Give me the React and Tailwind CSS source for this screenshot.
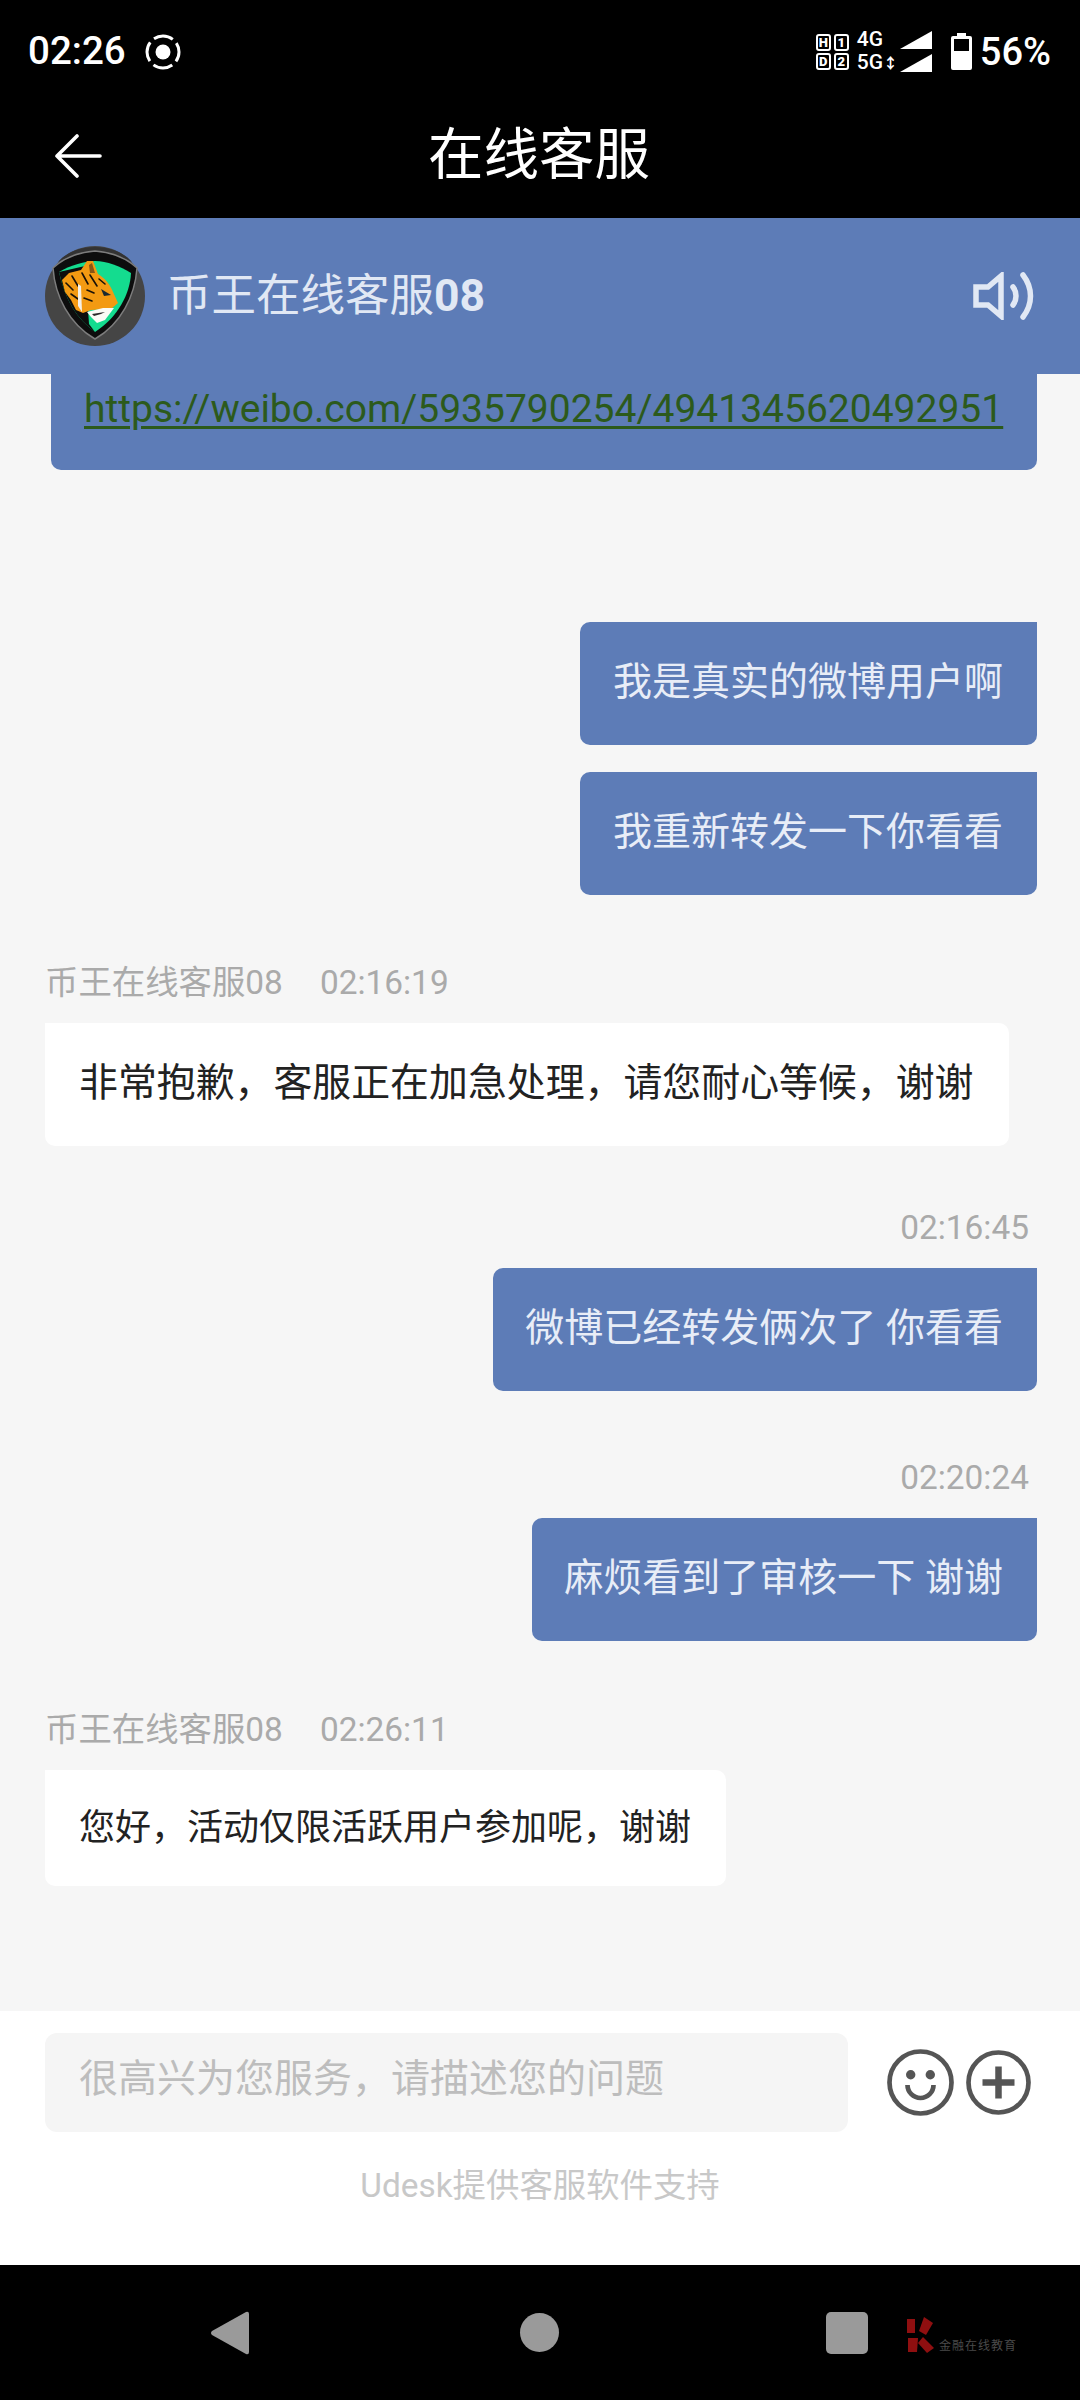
const font = "font-['Roboto','Noto_Sans_CJK_SC',sans-serif]"

function TigerAvatar() {
  return (
    <svg viewBox="0 0 100 100" className="w-[100px] h-[100px] shrink-0">
      <circle cx="50" cy="50" r="50" fill="#454545" />
      <path d="M13 16 C30 -4 70 -4 87 16 C70 6 30 6 13 16Z" fill="#333333" />
      {/* shield */}
      <path d="M50 5 C36 6 20 11 8 22 C10 50 24 78 50 93 C76 78 90 50 92 22 C80 11 64 6 50 5Z" fill="#0d0d0d" stroke="#7d7d7d" strokeWidth="1.5" />
      <path d="M14 26 C26 19 40 15 50 15 C62 15 75 20 86 27 C85 48 73 71 50 86 C32 73 20 54 14 26Z" fill="#14dc8f" />
      <path d="M14 26 L40 20 L44 78 L50 86 C32 73 20 54 14 26Z" fill="#0d0d0d" />
      {/* tiger head */}
      <path d="M17 34 L24 27 L36 24 L42 15 L48 15 L53 28 C60 32 66 40 68 46 L73 57 L66 63 L46 64 L38 67 L31 64 L26 54 L20 46 Z" fill="#f39a12" />
      <path d="M44 19 L47 17 L50 27 L45 27Z" fill="#8a5514" />
      <g fill="none" stroke="#1a1208" strokeWidth="1.6" strokeLinecap="round">
        <path d="M21 37 L28 44" />
        <path d="M27 30 L33 40" />
        <path d="M37 27 L43 38" />
        <path d="M45 29 L52 40" />
        <path d="M42 44 L49 47" />
        <path d="M39 52 L47 55" />
        <path d="M26 48 L33 53" />
        <path d="M54 33 L60 38" />
      </g>
      <path d="M33 38 L36 40 L37 66 L33 60Z" fill="#f5f0e6" />
      <path d="M56 43 L66 49 L59 50Z" fill="#1b2a30" />
      <path d="M42 66 L58 62 L69 62 L63 70 L60 74 L52 77 L46 71Z" fill="#fbfbf6" />
      <path d="M47 68 L60 66 L56 68 L49 70Z" fill="#2b2b2b" />
    </svg>
  )
}

function SpeakerIcon() {
  return (
    <svg viewBox="0 0 62 48" className="w-[62px] h-[48px]" fill="none" stroke="#e1e8f4" strokeWidth="5.5">
      <path d="M3 15 H15 L28 4 V44 L15 33 H3 Z" />
      <path d="M40 15 C44 20 44 28 40 33" strokeLinecap="round" strokeWidth="5.5" />
      <path d="M50 3 C60 16 60 32 50 45" strokeLinecap="round" strokeWidth="5.5" />
    </svg>
  )
}

function SimBox({ a, b }) {
  return (
    <div className="flex flex-col gap-[2px]">
      {[a, b].map(t => (
        <span key={t} className="w-[15px] h-[17px] rounded-[3px] border-[2px] border-white flex items-center justify-center text-[13px] font-black leading-none text-white">{t}</span>
      ))}
    </div>
  )
}

function StatusBar() {
  return (
    <div className="h-[100px] flex items-center justify-between pl-[28px] pr-[29px] pt-[3px] text-white">
      <div className="flex items-center gap-[19px]">
        <span className="text-[38.5px] leading-none font-medium">02:26</span>
        <svg viewBox="0 0 36 36" className="w-[36px] h-[36px]" fill="none" stroke="white" strokeWidth="3">
          <circle cx="18" cy="18" r="7.5" fill="white" stroke="none" />
          <circle cx="18" cy="18" r="16" strokeDasharray="20 5.13" strokeDashoffset="10" />
        </svg>
      </div>
      <div className="flex items-center">
        <div className="flex gap-[3px]">
          <SimBox a="H" b="D" />
          <SimBox a="1" b="2" />
        </div>
        <div className="flex flex-col ml-[8px] w-[43px] text-[21px] font-medium leading-[23px]">
          <span>4G</span>
          <span className="whitespace-nowrap">5G<span className="text-[15px] font-bold">↕</span></span>
        </div>
        <svg viewBox="0 0 32 41" className="w-[32px] h-[41px]" fill="white">
          <path d="M0 18 L32 0 V18 Z" />
          <path d="M0 41 L32 23 V41 Z" />
        </svg>
        <svg viewBox="0 0 21 37" className="w-[21px] h-[37px] ml-[19px]" fill="white">
          <path fillRule="evenodd" d="M6 0 H15 V3 H19 A2 2 0 0 1 21 5 V35 A2 2 0 0 1 19 37 H2 A2 2 0 0 1 0 35 V5 A2 2 0 0 1 2 3 H6 Z M3 6 V18 H18 V6 Z" />
        </svg>
        <span className="text-[38px] leading-none font-medium ml-[8px]">56%</span>
      </div>
    </div>
  )
}

function Outgoing({ time, width, children }) {
  return (
    <div className="flex flex-col items-end pr-[43px]">
      {time && <div className="text-[33.4px] leading-[40px] text-[#aaaaaa] pr-[8px] mb-[20px]">{time}</div>}
      <div className={`${width} h-[123px] rounded-[10px] rounded-tr-none bg-[#5d7cb7] text-[#e8edf7] text-[39px] flex items-center justify-end pr-[34px] pb-[3px]`}>
        {children}
      </div>
    </div>
  )
}

function Incoming({ name, time, width, text, children }) {
  return (
    <div className="flex flex-col items-start pl-[45px]">
      <div className="flex gap-[37px] text-[33.4px] leading-[40px] text-[#aaaaaa] mb-[20px]">
        <span>{name}</span>
        <span>{time}</span>
      </div>
      <div className={`${width} ${text} rounded-[10px] rounded-tl-none bg-white text-[#222222] flex items-center pl-[34px]`}>
        {children}
      </div>
    </div>
  )
}

export default function App() {
  return (
    <div className={`w-[1080px] h-[2400px] flex flex-col bg-[#f6f6f6] overflow-hidden ${font}`}>
      {/* top bars */}
      <div className="h-[218px] bg-black shrink-0">
        <StatusBar />
        <div className="h-[112px] grid grid-cols-[1fr_auto_1fr] items-center text-white text-[55.5px]">
          <svg viewBox="0 0 48 44" className="w-[48px] h-[44px] ml-[54px]" fill="none" stroke="white" strokeWidth="3.6" strokeLinecap="round" strokeLinejoin="round">
            <path d="M46 22 H3 M23 2 L3 22 L23 42" />
          </svg>
          <span className="pr-[2px]">在线客服</span>
        </div>
      </div>

      {/* agent header */}
      <div className="h-[156px] shrink-0 bg-[#5d7cb7] flex items-center justify-between pl-[45px] pr-[45px] text-[#e1e8f4]">
        <div className="flex items-center gap-[22px]">
          <TigerAvatar />
          <span className="text-[44.5px] leading-none">币王在线客服<b className="font-bold">08</b></span>
        </div>
        <SpeakerIcon />
      </div>

      {/* messages */}
      <div className="flex-1 flex flex-col">
        <div className="ml-[51px] mr-[43px] h-[96px] bg-[#5d7cb7] rounded-b-[10px] pl-[33px] pt-[4px] text-[39px] leading-[62px] text-[#2c5a1c] underline underline-offset-[4px] whitespace-nowrap">
          https://weibo.com/5935790254/4941345620492951
        </div>

        <div className="mt-[152px] flex flex-col gap-[27px]">
          <Outgoing width="w-[457px]">我是真实的微博用户啊</Outgoing>
          <Outgoing width="w-[457px]">我重新转发一下你看看</Outgoing>
        </div>

        <div className="mt-[68px]">
          <Incoming name="币王在线客服08" time="02:16:19" width="w-[964px]" text="h-[123px] text-[38.9px] pb-[3px]">
            非常抱歉，客服正在加急处理，请您耐心等候，谢谢
          </Incoming>
        </div>

        <div className="mt-[62px]">
          <Outgoing time="02:16:45" width="w-[544px]">微博已经转发俩次了 你看看</Outgoing>
        </div>

        <div className="mt-[67px]">
          <Outgoing time="02:20:24" width="w-[505px]">麻烦看到了审核一下 谢谢</Outgoing>
        </div>

        <div className="mt-[69px]">
          <Incoming name="币王在线客服08" time="02:26:11" width="w-[681px]" text="h-[116px] text-[36px]">
            您好，活动仅限活跃用户参加呢，谢谢
          </Incoming>
        </div>
      </div>

      {/* composer */}
      <div className="h-[254px] shrink-0 bg-white pt-[22px]">
        <div className="flex items-center pl-[45px]">
          <div className="w-[803px] h-[99px] rounded-[12px] bg-[#f5f5f5] pl-[34px] pb-[6px] flex items-center text-[39px] text-[#bdbdbd]">
            很高兴为您服务，请描述您的问题
          </div>
          <svg viewBox="0 0 67 67" className="w-[67px] h-[67px] ml-[39px]" fill="none" stroke="#555555" strokeWidth="4.7">
            <circle cx="33.5" cy="33.5" r="31" />
            <circle cx="23.7" cy="25.7" r="4.7" fill="#555555" stroke="none" />
            <circle cx="43.3" cy="25.7" r="4.7" fill="#555555" stroke="none" />
            <path d="M20.5 36 A13 13 0 0 0 46.5 36" />
          </svg>
          <svg viewBox="0 0 65 65" className="w-[65px] h-[65px] ml-[12px]" fill="none" stroke="#555555" strokeWidth="4.7">
            <circle cx="32.5" cy="32.5" r="30" />
            <path d="M32.5 16.5 V48.5 M16.5 32.5 H48.5" strokeWidth="6.5" />
          </svg>
        </div>
        <div className="mt-[33px] text-center text-[33.4px] leading-[42px] text-[#c8c8c8]">Udesk提供客服软件支持</div>
      </div>

      {/* nav bar */}
      <div className="h-[135px] shrink-0 bg-black flex items-center pl-[210px]">
        <svg viewBox="0 0 39 44" className="w-[39px] h-[44px]" fill="#9a9a9a">
          <path d="M36 1 Q39 0 39 3 V41 Q39 44 36 43 L2 24 Q0 22 2 20 Z" />
        </svg>
        <span className="ml-[271px] w-[39px] h-[39px] rounded-full bg-[#9a9a9a]" />
        <span className="ml-[267px] w-[42px] h-[42px] rounded-[5px] bg-[#9a9a9a]" />
        <div className="flex items-end ml-[36px] mt-[5px]">
          <svg viewBox="0 0 30 36" className="w-[30px] h-[36px]" fill="#8f0f10">
            <path d="M3 2 H11 V16 H3 Z" />
            <path d="M20 0 L29 6 L22 18 L15 14 Z" />
            <path d="M4 21 H14 L13 35 H4 Z" />
            <path d="M19 20 L30 31 L23 36 L14 26 Z" />
          </svg>
          <span className="ml-[5px] text-[12px] leading-[13px] tracking-[1px] text-[#4a4a4a] whitespace-nowrap">金融在线教育</span>
        </div>
      </div>
    </div>
  )
}
